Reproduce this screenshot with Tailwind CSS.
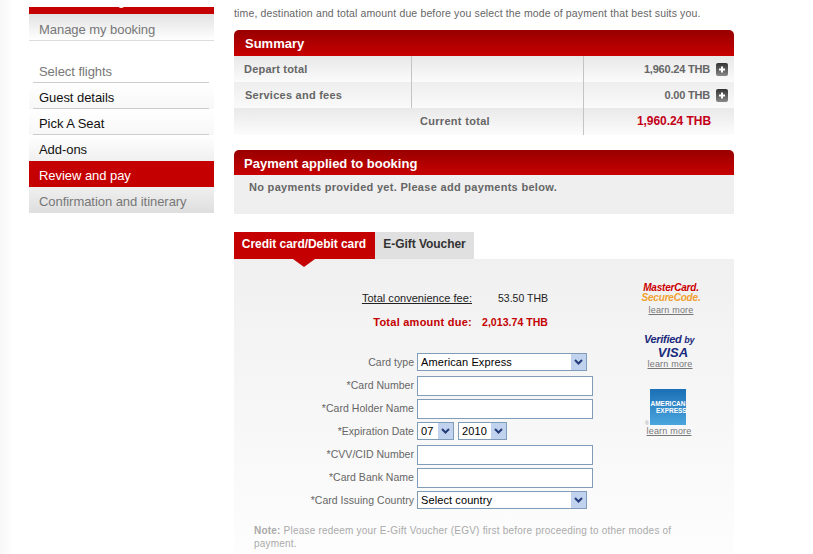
<!DOCTYPE html>
<html lang="en">
<head>
    <meta charset="UTF-8">
    <title>Review and pay</title>
    <script src="https://cdn.jsdelivr.net/npm/@tailwindcss/browser@4"></script>
</head>
<body class="bg-white w-[813px] h-[554px] overflow-hidden font-['Liberation_Sans',Arial,sans-serif]">
    <div class="flex h-[554px]">
        <div class="w-[11px] h-full shrink-0 bg-gradient-to-r from-[#f8f8f8] to-[#fdfdfd]"></div>

        <!-- sidebar -->
        <div class="w-[185px] ml-[18px] shrink-0 text-[13px] tracking-[-0.05px]">
            <div class="mt-[7px] h-[7px] bg-[#c40000] overflow-hidden">
                <div class="-mt-[19px] h-[26px] leading-[26px] pl-[10px] text-white">Online booking</div>
            </div>
            <div class="h-[27px] leading-[32px] pl-[10px] text-[#777] bg-gradient-to-b from-[#e2e2e2] to-white border-b border-[#dddddd]">Manage my booking</div>

            <div class="mt-[17px]">
                <div class="h-[25px] leading-[28px] pl-[10px] text-[#777] mx-0 bg-white"><div class="-ml-[6px] pl-[6px] mr-[5px] h-[25px] border-b border-[#cccccc]">Select flights</div></div>
                <div class="h-[26px] leading-[30px] pl-[10px] text-[#111] bg-gradient-to-b from-white to-[#f7f7f7]"><div class="-ml-[6px] pl-[6px] mr-[5px] h-[26px] border-b border-[#cccccc]">Guest details</div></div>
                <div class="h-[26px] leading-[30px] pl-[10px] text-[#111] bg-gradient-to-b from-white to-[#f7f7f7]"><div class="-ml-[6px] pl-[6px] mr-[5px] h-[26px] border-b border-[#cccccc]">Pick A Seat</div></div>
                <div class="h-[26px] leading-[30px] pl-[10px] text-[#111] bg-gradient-to-b from-white to-[#f0f0f0]">Add-ons</div>
                <div class="h-[26px] leading-[30px] pl-[10px] text-white bg-[#c40000]">Review and pay</div>
                <div class="h-[26px] leading-[30px] pl-[10px] text-[#777] bg-gradient-to-b from-[#f0f0f0] to-[#dedede]">Confirmation and itinerary</div>
            </div>
        </div>

        <!-- main column -->
        <div class="w-[500px] ml-[20px] shrink-0">
            <p class="h-[30px] pt-[7px] text-[10.5px] leading-[13px] text-[#666] tracking-[0.14px] whitespace-nowrap">time, destination and total amount due before you select the mode of payment that best suits you.</p>

            <!-- summary -->
            <div class="h-[26px] leading-[27px] pl-[11px] rounded-t-[5px] bg-gradient-to-b from-[#980000] to-[#c80000] text-white font-bold text-[13px]">Summary</div>
            <div class="text-[11px] font-bold text-[#666]">
                <div class="flex h-[26px] leading-[26px] bg-gradient-to-b from-[#e8e8e8] to-[#fbfbfb]">
                    <div class="w-[178px] pl-[10px] border-r border-[#c4c4c4] tracking-[0.2px]">Depart total</div>
                    <div class="w-[172px] border-r border-[#c4c4c4]"></div>
                    <div class="flex-1 flex items-center justify-end pr-[6px] gap-[6px] tracking-[-0.2px]">
                        1,960.24 THB
                        <svg width="12" height="13" viewBox="0 0 12 13"><defs><linearGradient id="p1" x1="0" y1="0" x2="0" y2="1"><stop offset="0" stop-color="#333"/><stop offset="1" stop-color="#888"/></linearGradient></defs><rect width="12" height="13" rx="2" fill="url(#p1)"/><path d="M3 6.5h6M6 3.5v6" stroke="#fff" stroke-width="2"/></svg>
                    </div>
                </div>
                <div class="flex h-[26px] leading-[26px] bg-gradient-to-b from-[#eeeeee] to-[#fafafa]">
                    <div class="w-[178px] pl-[11px] border-r border-[#c4c4c4] tracking-[0.25px]">Services and fees</div>
                    <div class="w-[172px] border-r border-[#c4c4c4]"></div>
                    <div class="flex-1 flex items-center justify-end pr-[6px] gap-[6px] tracking-[-0.2px]">
                        0.00 THB
                        <svg width="12" height="13" viewBox="0 0 12 13"><rect width="12" height="13" rx="2" fill="url(#p1)"/><path d="M3 6.5h6M6 3.5v6" stroke="#fff" stroke-width="2"/></svg>
                    </div>
                </div>
                <div class="flex h-[27px] leading-[26px] bg-gradient-to-b from-[#e9e9e9] to-[#fcfcfc]">
                    <div class="w-[350px] pl-[186px] border-r border-[#c4c4c4] tracking-[0.3px]">Current total</div>
                    <div class="flex-1 text-right pr-[23px] text-[#c40018] text-[12px] tracking-[-0.05px]">1,960.24 THB</div>
                </div>
            </div>

            <!-- payment applied -->
            <div class="mt-[15px] h-[25px] leading-[27px] pl-[10px] rounded-t-[5px] bg-gradient-to-b from-[#980000] to-[#c80000] text-white font-bold text-[13px]">Payment applied to booking</div>
            <div class="h-[39px] pl-[15px] pt-[5px] bg-[#efefef] text-[11px] leading-[14px] font-bold text-[#666] tracking-[0.3px]">No payments provided yet. Please add payments below.</div>

            <!-- tabs -->
            <div class="mt-[18px] flex h-[27px] text-[12px] font-bold leading-[24px] tracking-[-0.05px]">
                <div class="relative w-[140px] mr-[1px] text-center bg-[#c40000] text-white shadow-[1px_0_0_#c40000]">
                    Credit card/Debit card
                    <div class="absolute top-[27px] left-[59px] w-0 h-0 border-x-[11px] border-x-transparent border-t-[8px] border-t-[#c40000]"></div>
                </div>
                <div class="w-[99px] text-center bg-[#e0e0e0] text-[#333]">E-Gift Voucher</div>
            </div>

            <!-- card form -->
            <div class="flex h-[295px] bg-gradient-to-b from-[#f0f0f0] to-[#fdfdfd] text-[10.5px]">
                <div class="w-[400px] shrink-0">
                    <div class="flex pt-[33px] h-[56px] text-[#222]">
                        <div class="w-[238px] text-right underline leading-[13px] text-[11px] tracking-[0.03px]">Total convenience fee:</div>
                        <div class="ml-[26px] leading-[13px]">53.50 THB</div>
                    </div>
                    <div class="flex h-[38px] pt-[1px] text-[#c40000] font-bold leading-[13px]">
                        <div class="w-[238px] text-right text-[11px] tracking-[0.25px]">Total amount due:</div>
                        <div class="ml-[10px] tracking-[0.05px]">2,013.74 THB</div>
                    </div>

                    <div class="text-[#666] leading-[18px] tracking-[0.03px]">
                        <div class="flex h-[23px]">
                            <div class="w-[180px] text-right">Card type</div>
                            <div class="ml-[3px] w-[170px] h-[18px] border border-[#7f9db9] bg-white flex justify-between items-center pl-[3px] text-black text-[11px] leading-[14px] tracking-[0.1px]">American Express
                                <div class="w-[15px] h-[16px] bg-[#c1d2ee] flex items-center justify-center"><svg width="9" height="6" viewBox="0 0 9 6"><path d="M1 1l3.5 3.5L8 1" fill="none" stroke="#243c78" stroke-width="2"/></svg></div>
                            </div>
                        </div>
                        <div class="flex h-[23px]">
                            <div class="w-[180px] text-right">*Card Number</div>
                            <input class="ml-[3px] w-[176px] h-[20px] border border-[#7f9db9] bg-white" type="text">
                        </div>
                        <div class="flex h-[23px]">
                            <div class="w-[180px] text-right">*Card Holder Name</div>
                            <input class="ml-[3px] w-[176px] h-[20px] border border-[#7f9db9] bg-white" type="text">
                        </div>
                        <div class="flex h-[23px]">
                            <div class="w-[180px] text-right">*Expiration Date</div>
                            <div class="ml-[3px] w-[37px] h-[18px] border border-[#7f9db9] bg-white flex justify-between items-center pl-[3px] text-black text-[11px] leading-[14px] tracking-[0.1px]">07
                                <div class="w-[15px] h-[16px] bg-[#c1d2ee] flex items-center justify-center"><svg width="9" height="6" viewBox="0 0 9 6"><path d="M1 1l3.5 3.5L8 1" fill="none" stroke="#243c78" stroke-width="2"/></svg></div>
                            </div>
                            <div class="ml-[4px] w-[49px] h-[18px] border border-[#7f9db9] bg-white flex justify-between items-center pl-[3px] text-black text-[11px] leading-[14px] tracking-[0.1px]">2010
                                <div class="w-[15px] h-[16px] bg-[#c1d2ee] flex items-center justify-center"><svg width="9" height="6" viewBox="0 0 9 6"><path d="M1 1l3.5 3.5L8 1" fill="none" stroke="#243c78" stroke-width="2"/></svg></div>
                            </div>
                        </div>
                        <div class="flex h-[23px]">
                            <div class="w-[180px] text-right">*CVV/CID Number</div>
                            <input class="ml-[3px] w-[176px] h-[20px] border border-[#7f9db9] bg-white" type="text">
                        </div>
                        <div class="flex h-[23px]">
                            <div class="w-[180px] text-right">*Card Bank Name</div>
                            <input class="ml-[3px] w-[176px] h-[20px] border border-[#7f9db9] bg-white" type="text">
                        </div>
                        <div class="flex h-[23px]">
                            <div class="w-[180px] text-right">*Card Issuing Country</div>
                            <div class="ml-[3px] w-[170px] h-[18px] border border-[#7f9db9] bg-white flex justify-between items-center pl-[3px] text-black text-[11px] leading-[14px] tracking-[0.1px]">Select country
                                <div class="w-[15px] h-[16px] bg-[#c1d2ee] flex items-center justify-center"><svg width="9" height="6" viewBox="0 0 9 6"><path d="M1 1l3.5 3.5L8 1" fill="none" stroke="#243c78" stroke-width="2"/></svg></div>
                            </div>
                        </div>
                    </div>
                    <p class="mt-[10px] ml-[20px] w-[425px] text-[#aaa] text-[10px] leading-[13px] tracking-[0.21px]"><b>Note:</b> Please redeem your E-Gift Voucher (EGV) first before proceeding to other modes of payment.</p>
                </div>

                <!-- secure logos -->
                <div class="w-[100px] flex flex-col items-center text-[9px] text-[#777] leading-[11px]">
                    <div class="mt-[24px] ml-[-26px] text-center font-bold italic text-[10px] leading-[10px] tracking-[-0.2px]">
                        <div class="text-[#cc0000]">MasterCard.</div>
                        <div class="text-[#f0a030]">SecureCode.</div>
                    </div>
                    <div class="mt-[2px] ml-[-26px] underline tracking-[0.2px]">learn more</div>
                    <div class="mt-[18px] ml-[-30px] text-center text-[#1a2a7c] italic font-bold">
                        <div class="text-[11px] leading-[11px] tracking-[-0.3px]">Verified <span class="text-[9px]">by</span></div>
                        <div class="text-[13px] leading-[13px] pl-[8px]">VISA</div>
                    </div>
                    <div class="ml-[-28px] underline tracking-[0.2px]">learn more</div>
                    <div class="relative mt-[19px] ml-[-32px] w-[36px] h-[36px] bg-gradient-to-b from-[#1b6fb5] to-[#4aa6de] flex flex-col justify-center text-center text-white text-[6.5px] leading-[7px] font-bold">
                        <div>AMERICAN</div>
                        <div class="pl-[6px]">EXPRESS</div>
                        <div class="absolute left-[-5px] bottom-[-2px] text-[#999] text-[5px] font-normal">®</div>
                    </div>
                    <div class="mt-[1px] ml-[-30px] underline tracking-[0.2px]">learn more</div>
                </div>
            </div>
        </div>
    </div>
</body>
</html>
